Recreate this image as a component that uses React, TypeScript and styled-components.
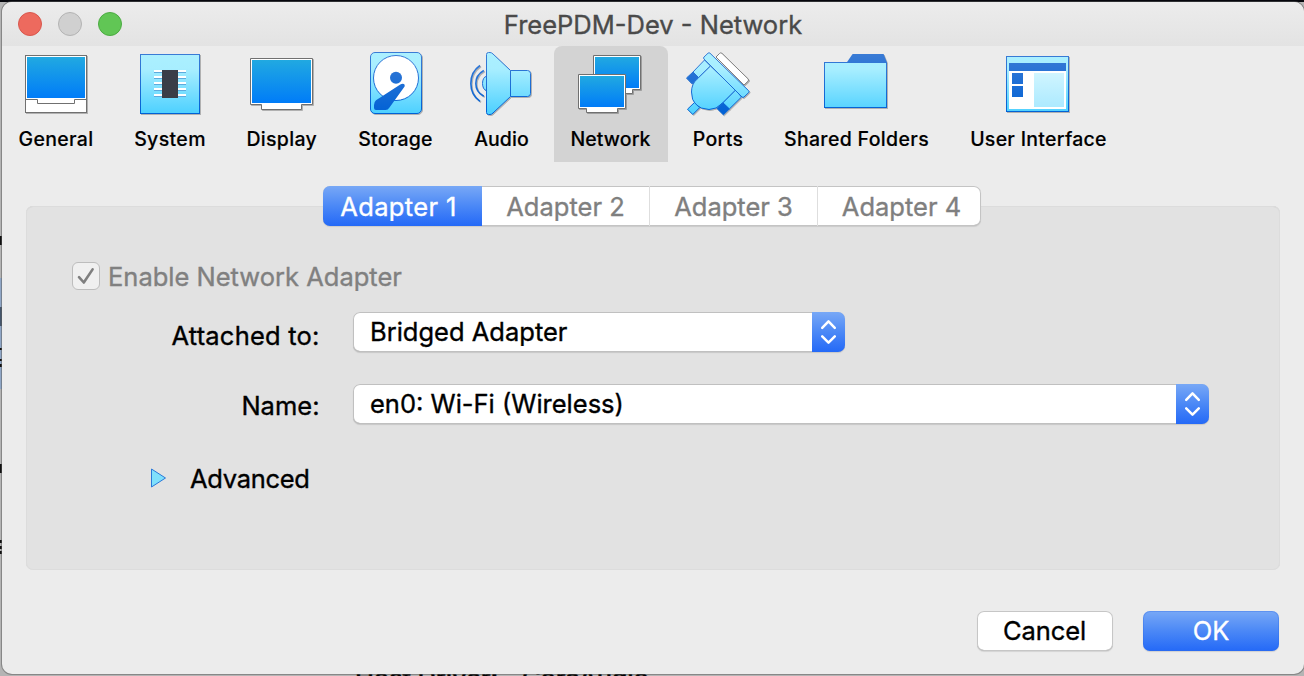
import React from 'react';
import styled, { createGlobalStyle } from 'styled-components';

const GlobalStyle = createGlobalStyle`
  * { box-sizing: border-box; }
  body { margin: 0; overflow: hidden; background: #b4b4b4; font-family: Inter, "Liberation Sans", sans-serif; -webkit-text-stroke: 0.35px currentColor; }
  button { font: inherit; border: 0; padding: 0; background: none; }
`;

const BLUE = 'linear-gradient(#78a8f6 0%, #4b88f6 50%, #2469f7 100%)';

const Desktop = styled.div`
  position: relative;
  width: 1304px;
  height: 676px;
  overflow: hidden;
  padding: 2px 0 0 2px;
  background:
    linear-gradient(#05060c, #05060c) 0 0 / 100% 2px no-repeat,
    linear-gradient(#111, #111) 0 236px / 2px 9px no-repeat,
    linear-gradient(#45566c, #45566c) 0 307px / 2px 19px no-repeat,
    linear-gradient(#111, #111) 0 348px / 2px 2px no-repeat,
    linear-gradient(#111, #111) 0 359px / 2px 2px no-repeat,
    linear-gradient(#111, #111) 0 364px / 2px 3px no-repeat,
    linear-gradient(#8fa6c6, #8fa6c6) 0 278px / 2px 111px no-repeat,
    linear-gradient(#111, #111) 0 464px / 2px 9px no-repeat,
    linear-gradient(#111, #111) 0 540px / 2px 3px no-repeat,
    linear-gradient(#111, #111) 0 546px / 2px 3px no-repeat,
    linear-gradient(#111, #111) 0 551px / 2px 3px no-repeat,
    #b4b4b4;
`;

const BackgroundText = styled.div`
  position: absolute;
  left: 355px;
  top: 663px;
  display: flex;
  gap: 24px;
  font-size: 25.5px;
  font-weight: 500;
  line-height: 30px;
  letter-spacing: -0.2px;
  white-space: nowrap;
  color: #000;
`;

const Window = styled.main`
  position: relative;
  display: flex;
  flex-direction: column;
  width: 1302px;
  height: 672px;
  border-radius: 10px;
  background: #ececec;
  overflow: hidden;
  box-shadow: 0 0 0 1px rgba(90, 90, 90, 0.5);
`;

const TitleBar = styled.header`
  display: grid;
  grid-template-columns: 200px 1fr 200px;
  align-items: center;
  height: 44px;
  flex: none;
  background: linear-gradient(#ececec, #e3e3e3);
`;

const Lights = styled.div`
  display: flex;
  gap: 16px;
  padding-left: 16px;
`;

const Light = styled.span<{ $fill: string; $edge: string }>`
  width: 24px;
  height: 24px;
  border-radius: 50%;
  background: ${(p) => p.$fill};
  border: 1px solid ${(p) => p.$edge};
`;

const Title = styled.h1`
  margin: 0;
  padding-top: 2px;
  font-size: 25.5px;
  font-weight: 400;
  line-height: 30px;
  text-align: center;
  color: #4a4a4a;
`;

const Toolbar = styled.nav`
  display: flex;
  gap: 8px;
  height: 116px;
  flex: none;
`;

const ToolItem = styled.button<{ $width: number; $selected?: boolean }>`
  display: flex;
  flex-direction: column;
  align-items: center;
  width: ${(p) => p.$width}px;
  height: 116px;
  padding-top: 6px;
  border-radius: 8px 8px 0 0;
  background: ${(p) => (p.$selected ? '#d3d3d3' : 'transparent')};
`;

const ToolLabel = styled.span<{ $spacing: number; $nudge?: number }>`
  margin-top: 11px;
  margin-left: ${(p) => p.$nudge ?? 0}px;
  font-size: 19.5px;
  font-weight: 500;
  line-height: 24px;
  letter-spacing: ${(p) => p.$spacing}px;
  white-space: nowrap;
  -webkit-text-stroke: 0.15px currentColor;
  color: #000;
`;

const IconSvg = styled.svg`
  display: block;
  width: 64px;
  height: 64px;
  flex: none;
  overflow: visible;
  filter: drop-shadow(1px 1px 0 rgba(0, 0, 0, 0.25));
`;

const Content = styled.section`
  display: flex;
  flex-direction: column;
  align-items: center;
  padding: 24px 24px 0;
`;

const Tabs = styled.div`
  position: relative;
  z-index: 1;
  display: flex;
  width: 658px;
  height: 40px;
  margin-bottom: -20px;
  transform: translateX(-1px);
  border-radius: 7px;
  overflow: hidden;
  background: #fff;
  box-shadow: inset 0 0 0 1px #c4c4c4, inset 0 -1px 0 #a8a8a8, 0 1px 1px rgba(0, 0, 0, 0.1);
`;

const Tab = styled.button<{ $width: number; $active?: boolean; $spacing?: number; $left?: number }>`
  width: ${(p) => p.$width}px;
  height: 40px;
  padding-top: 1px;
  padding-left: ${(p) => p.$left ?? 0}px;
  padding-right: ${(p) => (p.$active ? 8 : 0)}px;
  font-size: 25.5px;
  line-height: 38px;
  letter-spacing: ${(p) => p.$spacing ?? 0}px;
  color: ${(p) => (p.$active ? '#fff' : '#7f7f7f')};
  background: ${(p) => (p.$active ? BLUE : 'none')};
  & + & + & { box-shadow: inset 1px 0 0 #dedede; }
`;

const Panel = styled.div`
  width: 1254px;
  height: 364px;
  padding: 56px 0 0 46px;
  border-radius: 7px;
  background: #e2e2e2;
  box-shadow: inset 0 0 0 1px #dcdcdc, inset 0 1px 0 #d0d0d0;
`;

const CheckRow = styled.label`
  display: flex;
  align-items: center;
  gap: 8px;
  height: 28px;
  font-size: 25.5px;
  color: #808080;
`;

const CheckBox = styled.span`
  display: flex;
  width: 28px;
  height: 28px;
  border-radius: 6px;
  border: 1px solid #bdbdbd;
  background: #f0f0f0;
`;

const FormRow = styled.div<{ $top: number }>`
  display: flex;
  margin-top: ${(p) => p.$top}px;
  height: 40px;
`;

const FieldLabel = styled.span<{ $shift: number; $spacing: number }>`
  width: 247.5px;
  margin-right: 33.5px;
  padding-top: ${(p) => p.$shift}px;
  font-size: 25.5px;
  line-height: 40px;
  letter-spacing: ${(p) => p.$spacing}px;
  text-align: right;
  color: #000;
`;

const Combo = styled.div<{ $width: number }>`
  display: flex;
  justify-content: space-between;
  width: ${(p) => p.$width}px;
  height: 40px;
  border-radius: 7px;
  background: #fff;
  overflow: hidden;
  box-shadow: inset 0 0 0 1px #c0c0c0, inset 0 -1px 0 #9c9c9c, 0 1px 1px rgba(0, 0, 0, 0.12);
`;

const ComboText = styled.span`
  padding-left: 17px;
  font-size: 25.5px;
  line-height: 39px;
  color: #000;
`;

const Stepper = styled.span`
  width: 33px;
  height: 40px;
  background: ${BLUE};
`;

const Disclosure = styled.button`
  display: flex;
  align-items: center;
  gap: 23px;
  margin: 39px 0 0 78px;
  height: 30px;
  font-size: 25.5px;
  letter-spacing: -0.3px;
  color: #000;
`;

const Footer = styled.footer`
  display: flex;
  justify-content: flex-end;
  gap: 30px;
  padding: 41px 25px 0 0;
`;

const PushButton = styled.button<{ $primary?: boolean }>`
  width: 136px;
  height: 40px;
  border-radius: 7px;
  font-size: 25.5px;
  line-height: 38px;
  padding-bottom: 1px;
  padding-right: ${(p) => (p.$primary ? 0 : 1)}px;
  letter-spacing: -0.1px;
  color: ${(p) => (p.$primary ? '#fff' : '#000')};
  background: ${(p) => (p.$primary ? BLUE : '#fff')};
  box-shadow: ${(p) =>
    p.$primary
      ? 'inset 0 0 0 1px rgba(50,110,230,.35), 0 1px 1px rgba(0,0,0,.12)'
      : 'inset 0 0 0 1px #c6c6c6, inset 0 -1px 0 #a6a6a6, 0 1px 1px rgba(0,0,0,.1)'};
`;

const EDGE = 'url(#edge)';
const GLASS = 'url(#glass)';
const SCREEN = 'url(#screen)';

const GradientDefs = styled.svg`
  position: absolute;
  width: 0;
  height: 0;
`;

const Gradients = () => (
  <GradientDefs>
    <defs>
      <linearGradient id="edge" gradientUnits="userSpaceOnUse" x1="0" y1="2" x2="0" y2="62">
        <stop offset="0" stopColor="#3a7bd5" />
        <stop offset="1" stopColor="#0061d5" />
      </linearGradient>
      <linearGradient id="glass" gradientUnits="userSpaceOnUse" x1="0" y1="2" x2="0" y2="62">
        <stop offset="0" stopColor="#abf0ff" />
        <stop offset="0.25" stopColor="#a8eeff" />
        <stop offset="1" stopColor="#4cd0ff" />
      </linearGradient>
      <linearGradient id="screen" x1="0" y1="0" x2="0" y2="1">
        <stop offset="0" stopColor="#21a9e1" />
        <stop offset="1" stopColor="#007cf8" />
      </linearGradient>
    </defs>
  </GradientDefs>
);

const GeneralIcon = () => (
  <IconSvg viewBox="0 0 64 64">
    <rect x="1.5" y="3.5" width="61" height="57" fill="#fff" stroke="#707070" />
    <rect x="3" y="5" width="58" height="41" fill={SCREEN} />
    <path d="M2 47.5H13.5V51.5H50.5V47.5H62" fill="none" stroke="#707070" />
  </IconSvg>
);

const SystemIcon = () => (
  <IconSvg viewBox="0 0 64 64">
    <rect x="2.5" y="2.5" width="59" height="59" fill={GLASS} stroke={EDGE} />
    {[18, 24, 30, 36, 42].map((y) => (
      <g key={y}>
        <rect x="16" y={y} width="32" height="2" fill="#fff" />
        <rect x="16" y={y + 2} width="32" height="1" fill="#5eaadd" />
      </g>
    ))}
    <rect x="24" y="18" width="16" height="28" fill="#3a3d47" />
  </IconSvg>
);

const DisplayIcon = () => (
  <IconSvg viewBox="0 0 64 64">
    <path d="M.5 6.5H62.5V52.5H51.5V57.5H11.5V52.5H.5Z" fill="#fff" stroke="#707070" />
    <rect x="2" y="8" width="59" height="43" fill={SCREEN} />
  </IconSvg>
);

const StorageIcon = () => (
  <IconSvg viewBox="0 0 64 64">
    <rect x="6.5" y=".5" width="51" height="61" rx="4.5" fill={GLASS} stroke={EDGE} />
    <circle cx="32" cy="26" r="22.5" fill="#fff" stroke={EDGE} />
    <circle cx="32" cy="25.8" r="6" fill={EDGE} />
    <path d="M36.3 32.4L12 48.3Q10 50 10 53V56Q10 58 12 58H21.5Q24 58 25.5 55.5L40.6 34.6Q41.2 31.8 38.8 31.8Q37.4 31.8 36.3 32.4Z" fill={EDGE} />
  </IconSvg>
);

const AudioIcon = () => (
  <IconSvg viewBox="0 0 64 64">
    <path d="M10 13.5C-2.2 22-2.2 41 10 49.3M13.8 18.5C3.2 24.5 3.2 38.5 13.8 44.3" fill="none" stroke={EDGE} strokeWidth="1.6" />
    <path d="M16.5 24.3C11.2 25 11.2 37.8 16.5 38.6Z" fill={GLASS} stroke={EDGE} />
    <path d="M40.5 18.5H57.5Q60.5 18.5 60.5 21.5V41.5Q60.5 44.5 57.5 44.5H40.5Z" fill={GLASS} stroke={EDGE} />
    <path d="M16.5 2.5Q16.5.5 18.5.5H20Q21.6.5 23 2L40.5 18.5V44.5L23 61Q21.6 62.5 20 62.5H18.5Q16.5 62.5 16.5 60.5Z" fill={GLASS} stroke={EDGE} />
  </IconSvg>
);

const NetworkIcon = () => (
  <IconSvg viewBox="1 0 64 64">
    <path d="M15.5 3.5H62.5V37.5H54.5V41.5H23.5V37.5H15.5Z" fill="#fff" stroke="#707070" />
    <rect x="17" y="5" width="44" height="31" fill={SCREEN} />
    <path d="M.5 22.5H47.5V56.5H39.5V60.5H8.5V56.5H.5Z" fill="#fff" stroke="#707070" />
    <rect x="2" y="24" width="44" height="31" fill={SCREEN} />
  </IconSvg>
);

const PortsIcon = () => (
  <IconSvg viewBox="0 0 64 64">
    <path d="M30 5L33.6 1.4Q34.7.2 36 1.4L62 26.8Q63.2 28 62 29.2L58 33Z" fill="#fff" stroke="#808080" />
    <path d="M18.5 8L7 20L12.5 25.5L24.5 14Z" fill={GLASS} stroke={EDGE} />
    <path d="M7 20L.5 26L6 31.8L12.5 25.5Z" fill={EDGE} stroke={EDGE} />
    <path d="M49.5 38L36.8 50.7L43.3 57L55.5 45Z" fill={GLASS} stroke={EDGE} />
    <path d="M24.5 14L49.5 38L36 51.5Q30.5 57.5 23 57.5Q5.5 56.5 5.5 40Q5.5 32 11 27.2Z" fill={GLASS} stroke={EDGE} />
    <path d="M36.8 50.7L31 56.5L37.4 62.8L43.3 57Z" fill={EDGE} stroke={EDGE} />
    <path d="M8.4 50.6L1.5 57.2L6.8 62.5L13.6 55.7Z" fill={GLASS} stroke={EDGE} />
    <path d="M22 1.2Q23 .3 24 1.2L62.7 38.8Q63.5 39.7 62.6 40.6L58 45Q57 45.9 56 45L18 7Q17 6 18 5Z" fill={GLASS} stroke={EDGE} />
  </IconSvg>
);

const FolderIcon = () => (
  <IconSvg viewBox="0 0 64 64">
    <path d="M22.7 10.5L28.6 2H59.6L63 10.5Z" fill={EDGE} />
    <rect x=".5" y="10.5" width="62" height="45" fill={GLASS} stroke={EDGE} />
  </IconSvg>
);

const InterfaceIcon = () => (
  <IconSvg viewBox="0 0 64 64">
    <rect x=".5" y="4.5" width="62" height="55" fill={GLASS} stroke={EDGE} />
    <rect x="3" y="11" width="57" height="8" fill={EDGE} />
    <rect x="3" y="19" width="57" height="38" fill="#fff" />
    <rect x="6" y="21" width="11" height="11" fill={EDGE} />
    <rect x="6" y="34" width="11" height="11" fill={EDGE} />
    <rect x="28" y="21" width="30" height="34" fill={GLASS} opacity="0.5" />
  </IconSvg>
);

const Chevrons = () => (
  <Stepper>
    <svg width="33" height="40" viewBox="0 0 33 40" fill="none" stroke="#fff" strokeWidth="2.5" strokeLinecap="round" strokeLinejoin="round">
      <path d="M10.2 15.8L16.5 9.4L22.8 15.8M10.2 24.3L16.5 30.7L22.8 24.3" />
    </svg>
  </Stepper>
);

const tools = [
  { label: 'General', width: 108, spacing: 0.33, nudge: 0, Icon: GeneralIcon },
  { label: 'System', width: 104, spacing: 0.35, nudge: 0, Icon: SystemIcon },
  { label: 'Display', width: 104, spacing: 0.3, nudge: -0.5, Icon: DisplayIcon },
  { label: 'Storage', width: 108, spacing: 0.25, nudge: -1, Icon: StorageIcon },
  { label: 'Audio', width: 88, spacing: 0.05, nudge: -1, Icon: AudioIcon },
  { label: 'Network', width: 114, spacing: 0.1, nudge: -1, Icon: NetworkIcon },
  { label: 'Ports', width: 84, spacing: 0.3, nudge: 0, Icon: PortsIcon },
  { label: 'Shared Folders', width: 176, spacing: 0.34, nudge: 1, Icon: FolderIcon },
  { label: 'User Interface', width: 172, spacing: 0.28, nudge: 1, Icon: InterfaceIcon },
];

export default function App() {
  return (
    <>
      <GlobalStyle />
      <Gradients />
      <Desktop>
        <BackgroundText>
          <span>Host Driver:</span>
          <span>CoreAudio</span>
        </BackgroundText>
        <Window>
          <TitleBar>
            <Lights>
              <Light $fill="#ed6a5e" $edge="#d8574d" />
              <Light $fill="#d0d0d0" $edge="#b3b3b3" />
              <Light $fill="#61c655" $edge="#4cab42" />
            </Lights>
            <Title>FreePDM-Dev - Network</Title>
          </TitleBar>
          <Toolbar>
            {tools.map(({ label, width, spacing, nudge, Icon }) => (
              <ToolItem key={label} $width={width} $selected={label === 'Network'}>
                <Icon />
                <ToolLabel $spacing={spacing} $nudge={nudge}>{label}</ToolLabel>
              </ToolItem>
            ))}
          </Toolbar>
          <Content>
            <Tabs>
              <Tab $width={159} $active $spacing={0.36}>Adapter 1</Tab>
              <Tab $width={167}>Adapter 2</Tab>
              <Tab $width={168} $left={1}>Adapter 3</Tab>
              <Tab $width={164} $left={5}>Adapter 4</Tab>
            </Tabs>
            <Panel>
              <CheckRow>
                <CheckBox>
                  <svg width="26" height="26" viewBox="0 0 26 26" fill="none" stroke="#7f7f7f" strokeWidth="2.6" strokeLinecap="round" strokeLinejoin="round">
                    <path d="M6 14.2L10.8 19.5L19.6 6.4" />
                  </svg>
                </CheckBox>
                Enable Network Adapter
              </CheckRow>
              <FormRow $top={22}>
                <FieldLabel $shift={4} $spacing={0.2}>Attached to:</FieldLabel>
                <Combo $width={492}>
                  <ComboText>Bridged Adapter</ComboText>
                  <Chevrons />
                </Combo>
              </FormRow>
              <FormRow $top={32}>
                <FieldLabel $shift={2} $spacing={0}>Name:</FieldLabel>
                <Combo $width={856}>
                  <ComboText>en0: Wi-Fi (Wireless)</ComboText>
                  <Chevrons />
                </Combo>
              </FormRow>
              <Disclosure>
                <svg width="17" height="20" viewBox="0 0 17 20">
                  <path d="M1.5 1L15.5 10L1.5 19Z" fill="#7fe0fc" stroke="#2a78d8" strokeLinejoin="round" />
                </svg>
                Advanced
              </Disclosure>
            </Panel>
          </Content>
          <Footer>
            <PushButton>Cancel</PushButton>
            <PushButton $primary>OK</PushButton>
          </Footer>
        </Window>
      </Desktop>
    </>
  );
}
